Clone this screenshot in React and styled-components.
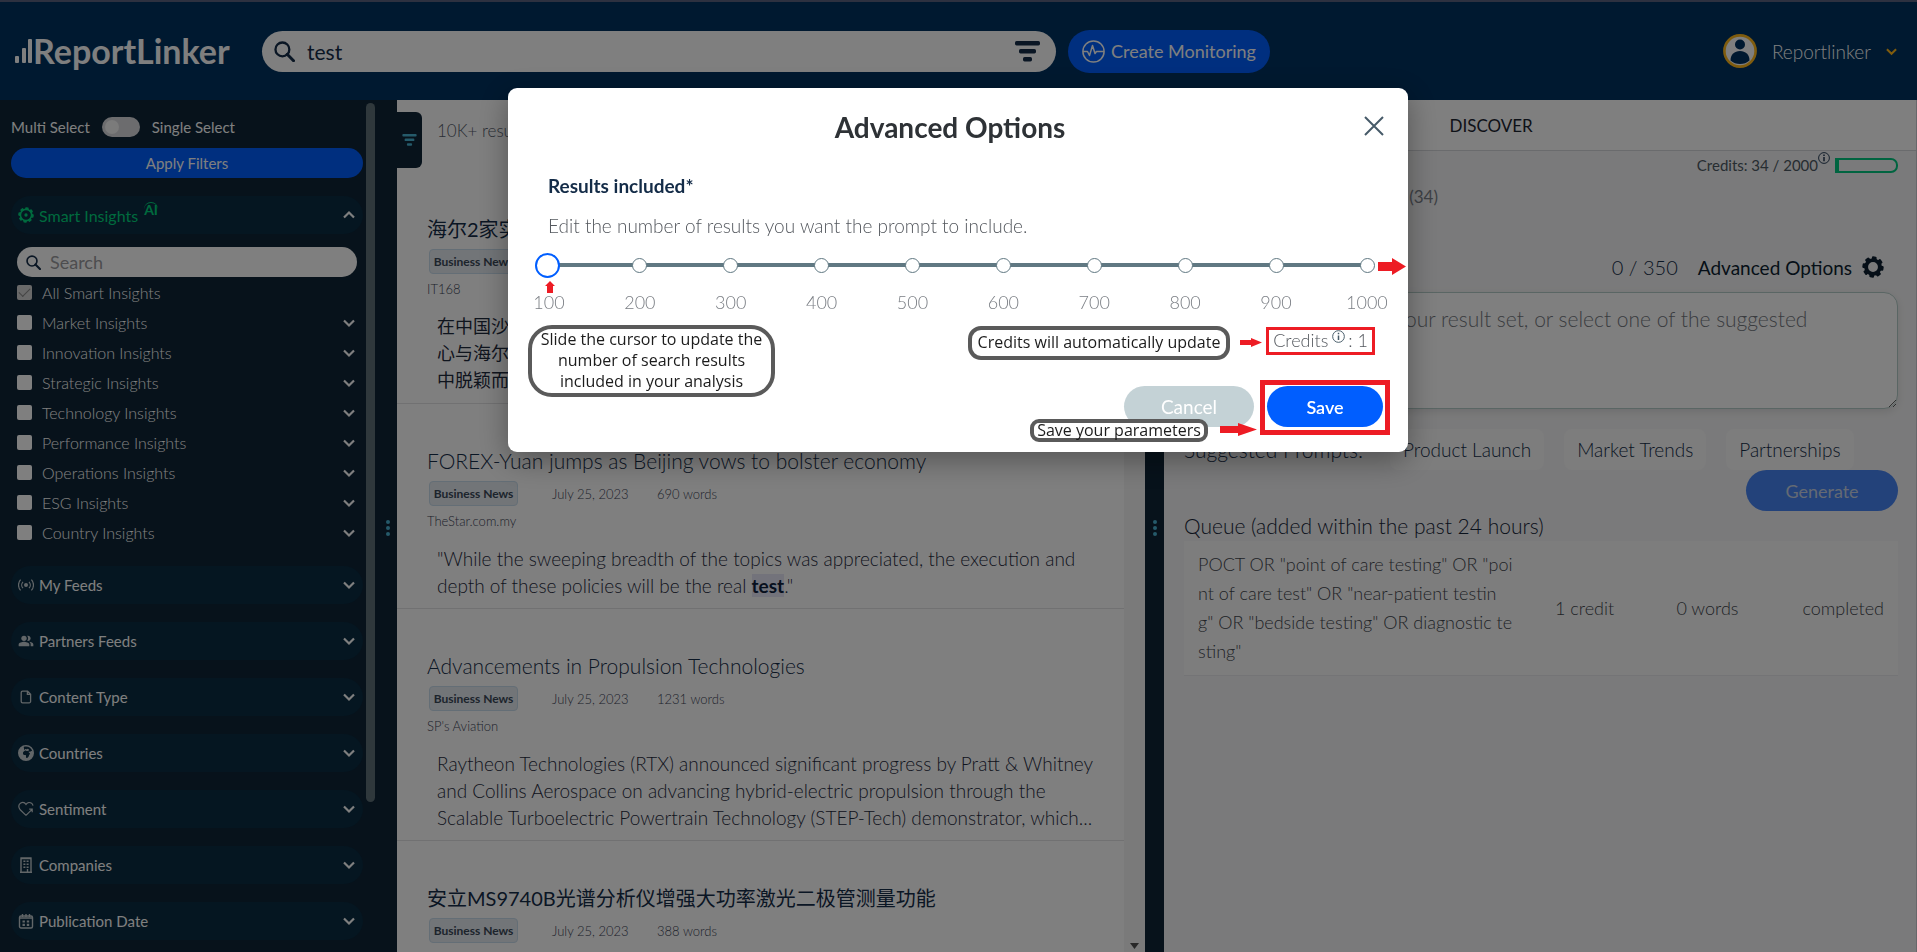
import React, { useState } from "react";
import styled, { createGlobalStyle, css } from "styled-components";
import { MdPeopleAlt } from "react-icons/md";
import { FaEarthAfrica } from "react-icons/fa6";

const GlobalStyle = createGlobalStyle`
  * {
    box-sizing: border-box;
  }

  body {
    margin: 0;
    overflow: hidden;
    font-family: Lato, "Noto Sans CJK SC", sans-serif;
    color: #142c48;
  }

  button,
  input,
  textarea {
    font-family: inherit;
  }

  button {
    border: 0;
    padding: 0;
    background: none;
    cursor: pointer;
  }
`;

const Page = styled.div`
  display: flex;
  flex-direction: column;
  height: 100vh;
`;

/* ---------- header ---------- */

const Header = styled.header`
  display: flex;
  align-items: center;
  flex: none;
  height: 100px;
  padding: 0 20px 0 14px;
  border-top: 2px solid #5a6280;
  background: #003260;
`;

const Logo = styled.a`
  display: flex;
  align-items: center;
  width: 248px;
  color: #fff;
  font-size: 34px;
  font-weight: 700;
  line-height: 36px;
  text-decoration: none;
`;

const SearchBox = styled.label`
  display: flex;
  align-items: center;
  flex: none;
  width: 794px;
  height: 41px;
  padding: 0 16px 0 12px;
  border-radius: 21px;
  background: #fff;
`;

const SearchInput = styled.input`
  flex: 1;
  min-width: 0;
  padding: 0 0 0 12px;
  border: 0;
  outline: 0;
  background: none;
  color: #142c48;
  font-size: 21px;
`;

const MonitoringButton = styled.button`
  display: flex;
  align-items: center;
  justify-content: center;
  gap: 6px;
  width: 202px;
  height: 43px;
  margin-left: 12px;
  border-radius: 22px;
  background: #005eff;
  color: #fff;
  font-size: 18px;
`;

const AccountButton = styled.button`
  display: flex;
  align-items: center;
  gap: 15px;
  margin-left: auto;
  color: #fff;
  font-size: 19px;
  font-weight: 300;
`;

/* ---------- sidebar ---------- */

const Columns = styled.main`
  display: grid;
  grid-template-columns: 397px minmax(0, 748fr) 19px minmax(0, 753fr);
  flex: 1;
  min-height: 0;
`;

const Sidebar = styled.aside`
  display: flex;
  min-height: 0;
  overflow: hidden;
  background: #0e2436;
  color: #fff;
`;

const Filters = styled.div`
  width: 366px;
  padding: 17px 3px 0 11px;
`;

const SelectMode = styled.label`
  display: flex;
  align-items: center;
  gap: 12px;
  height: 20px;
  font-size: 15px;
`;

const Switch = styled.input`
  appearance: none;
  width: 38px;
  height: 20px;
  margin: 0;
  padding: 3px;
  border-radius: 10px;
  background: #d8d8dc;

  &::before {
    content: "";
    display: block;
    width: 14px;
    height: 14px;
    border-radius: 50%;
    background: #f6f6f6;
  }
`;

const ApplyButton = styled.button`
  width: 100%;
  height: 30px;
  margin: 11px 0 18px;
  border-radius: 15px;
  background: #005eff;
  color: #fff;
  font-size: 15px;
`;

const Section = styled.button`
  display: flex;
  align-items: center;
  width: 100%;
  height: 38px;
  margin-bottom: 18px;
  padding: 0 8px 0 7px;
  border-radius: 19px;
  background: #0a2c42;
  color: ${props => (props.$active ? "#00d47c" : "#fff")};
  font-size: ${props => (props.$active ? 16 : 15)}px;

  > svg:last-child {
    margin-left: auto;
    color: #fff;
  }
`;

const SectionName = styled.span`
  margin-left: 5px;
`;

const AiMark = styled.sup`
  margin: -12px 0 0 6px;
  border-top: 1px solid #00d47c;
  border-radius: 8px;
  font-size: 14px;
  font-weight: 700;
  line-height: 14px;
`;

const FilterSearch = styled.label`
  display: flex;
  align-items: center;
  height: 30px;
  margin: -5px 6px 8px;
  padding: 0 9px;
  border-radius: 15px;
  background: #fff;
  color: #0e2436;

  input {
    padding-left: 9px;
    font-size: 18px;
  }

  input::placeholder {
    color: #9a9a9e;
  }
`;

const OptionList = styled.ul`
  display: grid;
  gap: 15px;
  margin: 0 0 26px;
  padding: 0 8px 0 6px;
  list-style: none;
`;

const Option = styled.li`
  display: flex;
  align-items: center;
  justify-content: space-between;
  height: 15px;
  font-size: 16px;
  font-weight: 300;

  label {
    display: flex;
    align-items: center;
    gap: 10px;
    line-height: 18px;
  }
`;

const Checkbox = styled.input`
  appearance: none;
  width: 15px;
  height: 15px;
  margin: 0;
  border-radius: 2px;
  background: #fff;

  &:checked {
    background: #d2d2d2;
  }

  &:checked::before {
    content: "";
    display: block;
    width: 10px;
    height: 5px;
    margin: 3px 0 0 2px;
    border: solid #8a8a8a;
    border-width: 0 0 1px 1px;
    rotate: -45deg;
  }
`;

const SidebarScroll = styled.div`
  width: 9px;
  height: 699px;
  margin-top: 3px;
  border-radius: 5px;
  background: #5e7078;
`;

const Handle = styled.div`
  display: flex;
  flex-direction: column;
  align-items: center;
  gap: 2px;
  padding-top: 420px;
  background: #0e2436;

  ${props => props.$wide && css`
    flex: 1;
    padding-left: 4px;
  `}

  i {
    width: 4px;
    height: 4px;
    border-radius: 50%;
    background: #4ab4d4;
  }
`;

/* ---------- results ---------- */

const Results = styled.section`
  display: flex;
  min-height: 0;
  overflow: hidden;
  background: #fff;
`;

const ResultList = styled.div`
  flex: 1;
  min-width: 0;
`;

const ResultsTop = styled.div`
  display: flex;
  gap: 15px;
  height: 72px;
  padding-top: 12px;
  color: #545c6a;
  font-size: 17px;
  font-weight: 300;
  line-height: 38px;
`;

const FilterTab = styled.button`
  display: flex;
  align-items: center;
  justify-content: center;
  width: 25px;
  height: 56px;
  border-radius: 0 6px 6px 0;
  background: #0e2436;
  color: #4ab4d4;
`;

const Article = styled.article`
  padding: 44px 30px 9px;
  border-bottom: 1px solid #e2e2e4;
`;

const ArticleTitle = styled.h3`
  margin: 0 0 7px;
  color: #142c48;
  font-size: 21px;
  font-weight: 300;
  line-height: 26px;
  white-space: nowrap;

  &:lang(zh) {
    font-size: 20px;
    font-weight: 400;
  }
`;

const ArticleMeta = styled.div`
  display: flex;
  align-items: center;
  height: 25px;
  color: #3c4456;
  font-size: 13px;
  font-weight: 300;
`;

const Tag = styled.span`
  width: 89px;
  margin: 0 34px 0 2px;
  border: 1px solid #c8dcec;
  border-radius: 4px;
  background: #e4eaf0;
  color: #3a4858;
  font-size: 12px;
  font-weight: 700;
  line-height: 23px;
  text-align: center;
  white-space: nowrap;
`;

const ArticleDate = styled.time`
  width: 105px;
`;

const Source = styled.div`
  margin: 6px 0 15px;
  color: #3c4456;
  font-size: 13px;
  font-weight: 300;
  line-height: 18px;
`;

const Excerpt = styled.p`
  margin: 0;
  padding-left: 10px;
  color: #1e2a3c;
  font-size: 19px;
  font-weight: 300;
  line-height: 27px;
  white-space: pre;

  &:lang(zh) {
    font-size: 18px;
    font-weight: 400;
  }

  mark {
    background: #e6e7f6;
    color: #0e1e3c;
    font-weight: 700;
  }
`;

const ResultsScroll = styled.div`
  display: flex;
  align-items: flex-end;
  justify-content: center;
  width: 21px;
  padding-bottom: 3px;
  background: #f4f4f4;
  color: #505050;
`;

/* ---------- prompt panel ---------- */

const Panel = styled.section`
  display: flex;
  flex-direction: column;
  min-width: 0;
  border-right: 1px solid #cfcfd4;
  background: #f5f5f6;
`;

const Tabs = styled.nav`
  display: flex;
  flex: none;
  height: 51px;
  border-bottom: 1px solid #d4d6da;
  background: #fff;
`;

const Tab = styled.button`
  width: 29%;
  color: #1c2430;
  font-size: 17px;
`;

const PanelBody = styled.div`
  padding: 0 18px 0 20px;
`;

const CreditsRow = styled.div`
  display: flex;
  align-items: center;
  justify-content: flex-end;
  height: 28px;
  color: #4e5a64;
  font-size: 15px;

  svg {
    margin: -14px 5px 0 0;
  }
`;

const CreditsMeter = styled.span`
  width: 63px;
  height: 15px;
  border: 2px solid #00c880;
  border-left-width: 4px;
  border-radius: 0 7px 7px 0;
`;

const PromptNav = styled.nav`
  display: flex;
  justify-content: space-between;
  width: 254px;
  color: #7c828a;
  font-size: 17px;
  line-height: 36px;
`;

const PromptTools = styled.div`
  display: flex;
  align-items: center;
  justify-content: flex-end;
  height: 50px;
  margin-top: 27px;
  padding-right: 14px;
  font-size: 20px;
  font-weight: 300;
`;

const OptionsButton = styled.button`
  display: flex;
  align-items: center;
  gap: 10px;
  margin-left: 20px;
  color: #0c1e30;
  font-size: 19px;
  font-weight: 400;
`;

const PromptField = styled.textarea`
  display: block;
  width: 100%;
  height: 117px;
  padding: 12px 14px;
  border: 1px solid #b4ccc8;
  border-radius: 0 14px 14px 14px;
  outline: 0;
  background: #fff;
  box-shadow: 0 3px 8px rgba(0, 0, 0, 0.1);
  font-size: 21px;
  font-weight: 300;
  line-height: 28px;

  &::placeholder {
    color: #74787e;
  }
`;

const Suggestions = styled.div`
  display: flex;
  align-items: center;
  gap: 20px;
  height: 41px;
  margin-top: 20px;
  font-size: 21px;
  font-weight: 300;
  white-space: nowrap;
`;

const SuggestionLabel = styled.span`
  width: 186px;
`;

const Chip = styled.button`
  height: 41px;
  padding: 0 13px;
  border-radius: 8px;
  background: #fafafa;
  color: #142c48;
  font-size: 19px;
  font-weight: 300;
`;

const GenerateButton = styled.button`
  display: block;
  width: 152px;
  height: 41px;
  margin-left: auto;
  border-radius: 21px;
  background: #4684f4;
  color: #c8d4e8;
  font-size: 18px;
`;

const QueueTable = styled.table`
  width: 100%;
  border-spacing: 0;
  color: #42464e;
  font-size: 18px;
  font-weight: 300;
  line-height: 29px;

  caption {
    padding-bottom: 1px;
    color: #142438;
    font-size: 21px;
    text-align: left;
  }

  td {
    padding: 9px 14px;
    border-bottom: 1px solid #e8e8ec;
    background: #fbfbfb;
    white-space: nowrap;
  }

  td:first-child {
    width: 50%;
  }

  td:nth-child(2) {
    width: 17%;
  }

  td:last-child {
    text-align: right;
  }
`;

/* ---------- dialog ---------- */

const Overlay = styled.div`
  position: fixed;
  inset: 0;
  display: flex;
  align-items: flex-start;
  justify-content: center;
  padding: 88px 1px 0 0;
  background: rgba(0, 0, 0, 0.5);
`;

const Dialog = styled.div`
  position: relative;
  width: 900px;
  padding: 21px 40px 25px;
  border-radius: 9px;
  background: #fff;
  box-shadow: 0 8px 30px rgba(0, 0, 0, 0.35);
`;

const DialogHead = styled.div`
  display: flex;
  align-items: center;
  height: 36px;
  margin-right: -28px;

  h2 {
    flex: 1;
    margin: 0;
    color: #2e3236;
    font-size: 28px;
    font-weight: 700;
    text-align: center;
  }

  button {
    width: 44px;
    height: 36px;
    color: #465a68;
  }
`;

const FieldName = styled.label`
  display: block;
  margin: 29px 0 16px;
  color: #142c48;
  font-size: 19px;
  font-weight: 700;
  line-height: 24px;
`;

const Hint = styled.p`
  margin: 0 0 14px;
  color: #54585e;
  font-size: 19px;
  font-weight: 300;
  line-height: 24px;
`;

const SliderBox = styled.div`
  display: grid;
  align-items: center;
  height: 26px;
  margin: 0 -13px;

  > * {
    grid-area: 1 / 1;
  }
`;

const Ticks = styled.div`
  display: flex;
  justify-content: space-between;
  align-items: center;
  height: 4px;
  margin: 0 13px;
  background: #607882;

  i {
    width: 15px;
    height: 15px;
    margin: 0 -7px;
    border: 1px solid #607882;
    border-radius: 50%;
    background: #fff;
  }
`;

const Range = styled.input`
  appearance: none;
  z-index: 1;
  width: 100%;
  margin: 0;
  background: none;

  &::-webkit-slider-thumb {
    appearance: none;
    width: 25px;
    height: 25px;
    border: 2px solid #005eff;
    border-radius: 50%;
    background: #fff;
  }
`;

const Scale = styled.div`
  display: flex;
  justify-content: space-between;
  margin: 12px 0 0;
  color: #7a7e84;
  font-size: 18px;
  font-weight: 300;
  line-height: 24px;

  span {
    display: flex;
    justify-content: center;
    width: 2px;
  }
`;

const Cost = styled.p`
  display: flex;
  align-items: center;
  justify-content: flex-end;
  height: 28px;
  margin: 12px 0 0;
  color: #54585e;
  font-size: 18px;
  font-weight: 300;

  svg {
    margin: -8px 3px 0 4px;
  }
`;

const Actions = styled.div`
  display: flex;
  align-items: flex-start;
  justify-content: flex-end;
  gap: 13px;
  margin: 32px -15px 0 0;
`;

const ActionButton = styled.button`
  width: ${props => (props.$primary ? 116 : 130)}px;
  height: 41px;
  border-radius: 21px;
  background: ${props => (props.$primary ? "#005eff" : "#c4d2d6")};
  color: #fff;
  font-size: ${props => (props.$primary ? 18 : 19)}px;
  font-weight: ${props => (props.$primary ? 600 : 400)};
`;

/* Notes drawn over the dialog, placed from its top left corner. */
const Note = styled.div`
  position: absolute;
  left: ${props => props.$x}px;
  top: ${props => props.$y}px;
  width: ${props => props.$w}px;
  height: ${props => props.$h}px;
  border: 4px solid #5a5a5a;
  border-radius: ${props => props.$r}px;
  background: #fff;
  color: #1c1c1c;
  font-family: "Open Sans", "Noto Sans", sans-serif;
  font-size: 16px;
  line-height: ${props => props.$line || 21}px;
  text-align: center;
  white-space: pre;
`;

const NoteFrame = styled.div`
  position: absolute;
  left: ${props => props.$x}px;
  top: ${props => props.$y}px;
  width: ${props => props.$w}px;
  height: ${props => props.$h}px;
  border: ${props => props.$line}px solid #ed1c24;
  pointer-events: none;
`;

const NoteArrow = styled.svg`
  position: absolute;
  left: ${props => props.$x}px;
  top: ${props => props.$y}px;
  fill: #ed1c24;
`;

/* ---------- icons ---------- */

const Chevron = ({ up, size = 12, color = "currentColor" }) => (
  <svg width={size} height={size} viewBox="0 0 12 12" fill="none" stroke={color} strokeWidth="2.2">
    <path d={up ? "M1 8.5 6 3.5l5 5" : "M1 3.5l5 5 5-5"} />
  </svg>
);

const Magnifier = ({ size }) => (
  <svg width={size} height={size} viewBox="0 0 20 20" fill="none" stroke="#142c48" strokeWidth="2.2">
    <circle cx="8" cy="8" r="6.6" />
    <path d="M12.6 12.6 18.6 18.8" strokeWidth="2.8" strokeLinecap="round" />
  </svg>
);

const FilterBars = ({ width, height }) => (
  <svg width={width} height={height} viewBox="0 0 25 21" fill="currentColor">
    <rect width="25" height="4.4" rx="1.6" />
    <rect x="4" y="8" width="17" height="4.4" rx="1.6" />
    <rect x="8" y="16" width="9" height="4.4" rx="1.6" />
  </svg>
);

const Info = ({ size, color = "#142c48" }) => (
  <svg width={size} height={size} viewBox="0 0 12 12" fill="none" stroke={color}>
    <circle cx="6" cy="6" r="5.4" strokeWidth="0.9" />
    <path d="M6 5v4.2M6 2.6v1.3" strokeWidth="1.4" />
  </svg>
);

const Cog = ({ size, hole, children }) => (
  <svg width={size} height={size} viewBox="0 0 24 24">
    <g fill="currentColor">
      {[0, 45, 90, 135, 180, 225, 270, 315].map(angle => (
        <rect key={angle} x="9.4" y="0.4" width="5.2" height="4" rx="1.2" transform={`rotate(${angle + 8} 12 12)`} />
      ))}
    </g>
    <circle cx="12" cy="12" r={(hole + 9.6) / 2} fill="none" stroke="currentColor" strokeWidth={9.6 - hole} />
    {children}
  </svg>
);

const strokeIcon = { width: 16, height: 16, viewBox: "0 0 16 16", fill: "none", stroke: "#c4ccd0" };

const Broadcast = () => (
  <svg {...strokeIcon} strokeWidth="1.2">
    <circle cx="8" cy="8" r="2" fill="#c4ccd0" stroke="none" />
    <path d="M5 4.8a4.6 4.6 0 0 0 0 6.4M11 4.8a4.6 4.6 0 0 1 0 6.4M2.6 2.6a8 8 0 0 0 0 10.8M13.4 2.6a8 8 0 0 1 0 10.8" />
  </svg>
);

const FileIcon = () => (
  <svg {...strokeIcon} strokeWidth="1.3">
    <path d="M4.6 2.2h5l3 3v7.2a1.4 1.4 0 0 1-1.4 1.4H4.6a1.4 1.4 0 0 1-1.4-1.4V3.6a1.4 1.4 0 0 1 1.4-1.4zM9.4 2.4v3h3" />
  </svg>
);

const HeartArrow = () => (
  <svg {...strokeIcon} strokeWidth="1.2">
    <path d="M8 14.4 2.2 8.8C.2 6.6.4 3.4 2.4 2.2 4.4 1 6.8 1.6 8 3.4 9.2 1.6 11.8 1 13.6 2.2c.8.6 1.2 1.4 1.4 2.4M8 14.4l5.8-5.8M11.2 8.2h3v3" />
  </svg>
);

const Tower = () => (
  <svg {...strokeIcon} strokeWidth="1.4">
    <path d="M3 15.3V1.5h10v13.8M2 15.3h12M2.4 1h11.2" />
    <path d="M6.4 3.5v8M9.6 3.5v8" strokeWidth="2" strokeDasharray="1.5 1.5" />
    <path d="M9.5 12v3" />
  </svg>
);

const CalendarIcon = () => (
  <svg {...strokeIcon} strokeWidth="1.4">
    <rect x="1.5" y="3" width="13" height="12" rx="1.5" />
    <path d="M4.5 1v3M8 1v3M11.5 1v3M1.5 5h13" />
    <path d="M4.5 8.5h3M8.8 8.5h3M4.5 11.8h3M8.8 11.8h3" strokeWidth="2.2" strokeDasharray="2.4 .6" />
  </svg>
);

const LogoBars = () => (
  <svg width="19" height="26" viewBox="0 0 19 26" fill="#fff">
    <rect x="1" y="18" width="4" height="7" rx="1" />
    <rect x="8" y="10" width="4" height="15" rx="1" />
    <rect x="14" y="1" width="4" height="24" rx="1" />
  </svg>
);

const Pulse = () => (
  <svg width="23" height="23" viewBox="0 0 23 23" fill="none" stroke="#fff" strokeWidth="1.5">
    <circle cx="11.5" cy="11.5" r="10.6" />
    <path d="M1 11.5h4.5l2 4 3-10 2.5 8 1.5-2h7.5" strokeLinejoin="round" />
  </svg>
);

const Avatar = () => (
  <svg width="34" height="34" viewBox="0 0 34 34">
    <circle cx="17" cy="17" r="15.6" fill="#fff" stroke="#ffb81c" strokeWidth="2.6" />
    <circle cx="17" cy="10.5" r="5" fill="#003260" />
    <path d="M7.5 26.5c0-6 4-9.5 9.5-9.5s9.5 3.5 9.5 9.5c-5 4.7-14 4.7-19 0z" fill="#003260" />
  </svg>
);

/* ---------- data ---------- */

const insights = ["Market", "Innovation", "Strategic", "Technology", "Performance", "Operations", "ESG", "Country"];

const sections = [
    { name: "My Feeds", icon: <Broadcast /> },
    { name: "Partners Feeds", icon: <MdPeopleAlt size={16} color="#c4ccd0" /> },
    { name: "Content Type", icon: <FileIcon /> },
    { name: "Countries", icon: <FaEarthAfrica size={16} color="#c4ccd0" /> },
    { name: "Sentiment", icon: <HeartArrow /> },
    { name: "Companies", icon: <Tower /> },
    { name: "Publication Date", icon: <CalendarIcon /> }
];

const articles = [
    {
        lang: "zh",
        title: "海尔2家实验室获得国家认可",
        words: 512,
        source: "IT168",
        excerpt: "在中国沙漠地区的测试中\n心与海尔合作的产品测试\n中脱颖而出"
    },
    {
        lang: "en",
        title: "FOREX-Yuan jumps as Beijing vows to bolster economy",
        words: 690,
        source: "TheStar.com.my",
        excerpt: (
            <>
                {'"While the sweeping breadth of the topics was appreciated, the execution and\ndepth of these policies will be the real '}
                <mark>test</mark>
                {'."'}
            </>
        )
    },
    {
        lang: "en",
        title: "Advancements in Propulsion Technologies",
        words: 1231,
        source: "SP's Aviation",
        excerpt: "Raytheon Technologies (RTX) announced significant progress by Pratt & Whitney\nand Collins Aerospace on advancing hybrid-electric propulsion through the\nScalable Turboelectric Powertrain Technology (STEP-Tech) demonstrator, which..."
    },
    {
        lang: "zh",
        title: "安立MS9740B光谱分析仪增强大功率激光二极管测量功能",
        words: 388
    }
];

const steps = [100, 200, 300, 400, 500, 600, 700, 800, 900, 1000];

const Dots = ({ wide }) => (
  <Handle $wide={wide}>
    <i />
    <i />
    <i />
  </Handle>
);

function TopBar() {
    return (
        <Header>
            <Logo href="#" aria-label="ReportLinker">
                <LogoBars />
                ReportLinker
            </Logo>
            <SearchBox>
                <Magnifier size={21} />
                <SearchInput defaultValue="test" aria-label="Search" />
                <FilterBars width={25} height={21} />
            </SearchBox>
            <MonitoringButton>
                <Pulse />
                Create Monitoring
            </MonitoringButton>
            <AccountButton>
                <Avatar />
                Reportlinker
                <Chevron size={11} color="#ffb81c" />
            </AccountButton>
        </Header>
    );
}

function FilterSidebar() {
    return (
        <Sidebar>
            <Filters>
                <SelectMode>
                    Multi Select
                    <Switch type="checkbox" role="switch" />
                    Single Select
                </SelectMode>
                <ApplyButton>Apply Filters</ApplyButton>
                <Section $active>
                    <Cog size={16} hole={7.2}>
                        <circle cx="12" cy="12" r="2.5" fill="currentColor" />
                    </Cog>
                    <SectionName>Smart Insights</SectionName>
                    <AiMark>AI</AiMark>
                    <Chevron up />
                </Section>
                <FilterSearch>
                    <Magnifier size={15} />
                    <SearchInput placeholder="Search" aria-label="Search insights" />
                </FilterSearch>
                <OptionList>
                    <Option>
                        <label>
                            <Checkbox type="checkbox" defaultChecked />
                            All Smart Insights
                        </label>
                    </Option>
                    {insights.map(name =>
                        <Option key={name}>
                            <label>
                                <Checkbox type="checkbox" />
                                {name} Insights
                            </label>
                            <Chevron />
                        </Option>
                    )}
                </OptionList>
                {sections.map(section =>
                    <Section key={section.name}>
                        {section.icon}
                        <SectionName>{section.name}</SectionName>
                        <Chevron />
                    </Section>
                )}
            </Filters>
            <SidebarScroll />
            <Dots wide />
        </Sidebar>
    );
}

function ResultsColumn() {
    return (
        <Results>
            <ResultList>
                <ResultsTop>
                    <FilterTab aria-label="Filters">
                        <FilterBars width={15} height={12} />
                    </FilterTab>
                    10K+ results
                </ResultsTop>
                {articles.map(article =>
                    <Article key={article.title} lang={article.lang}>
                        <ArticleTitle>{article.title}</ArticleTitle>
                        <ArticleMeta>
                            <Tag>Business News</Tag>
                            <ArticleDate>July 25, 2023</ArticleDate>
                            {article.words} words
                        </ArticleMeta>
                        {article.source && <Source>{article.source}</Source>}
                        {article.excerpt && <Excerpt>{article.excerpt}</Excerpt>}
                    </Article>
                )}
            </ResultList>
            <ResultsScroll>
                <svg width="9" height="6" viewBox="0 0 9 6" fill="currentColor">
                    <path d="M0 0h9L4.5 6z" />
                </svg>
            </ResultsScroll>
        </Results>
    );
}

function PromptPanel() {
    return (
        <Panel>
            <Tabs>
                <Tab>GENERATE</Tab>
                <Tab>DISCOVER</Tab>
            </Tabs>
            <PanelBody>
                <CreditsRow>
                    Credits: 34 / 2000
                    <Info size={12} />
                    <CreditsMeter />
                </CreditsRow>
                <PromptNav>
                    <span>Prompt</span>
                    <span>History (34)</span>
                </PromptNav>
                <PromptTools>
                    0 / 350
                    <OptionsButton>
                        Advanced Options
                        <Cog size={22} hole={5.4} />
                    </OptionsButton>
                </PromptTools>
                <PromptField
                    aria-label="Prompt"
                    placeholder="Ask a question about your result set, or select one of the suggested"
                />
                <Suggestions>
                    <SuggestionLabel>Suggested Prompts:</SuggestionLabel>
                    <Chip>Product Launch</Chip>
                    <Chip>Market Trends</Chip>
                    <Chip>Partnerships</Chip>
                </Suggestions>
                <GenerateButton>Generate</GenerateButton>
                <QueueTable>
                    <caption>Queue (added within the past 24 hours)</caption>
                    <tbody>
                        <tr>
                            <td>
                                POCT OR "point of care testing" OR "poi<br />
                                nt of care test" OR "near-patient testin<br />
                                g" OR "bedside testing" OR diagnostic te<br />
                                sting"
                            </td>
                            <td>1 credit</td>
                            <td>0 words</td>
                            <td>completed</td>
                        </tr>
                    </tbody>
                </QueueTable>
            </PanelBody>
        </Panel>
    );
}

function AdvancedOptions() {
    const [count, setCount] = useState(100);

    return (
        <Overlay>
            <Dialog role="dialog" aria-labelledby="options-title">
                <DialogHead>
                    <h2 id="options-title">Advanced Options</h2>
                    <button aria-label="Close">
                        <svg width="20" height="20" viewBox="0 0 20 20" stroke="currentColor" strokeWidth="2">
                            <path d="M1 1l18 18M19 1 1 19" />
                        </svg>
                    </button>
                </DialogHead>
                <FieldName htmlFor="result-count">Results included*</FieldName>
                <Hint>Edit the number of results you want the prompt to include.</Hint>
                <SliderBox>
                    <Ticks>{steps.map(step => <i key={step} />)}</Ticks>
                    <Range
                        id="result-count"
                        type="range"
                        min="100"
                        max="1000"
                        step="100"
                        value={count}
                        onChange={event => setCount(Number(event.target.value))}
                    />
                </SliderBox>
                <Scale>{steps.map(step => <span key={step}>{step}</span>)}</Scale>
                <Cost>
                    Credits
                    <Info size={13} color="#465a68" />
                    : {count / 100}
                </Cost>
                <Actions>
                    <ActionButton>Cancel</ActionButton>
                    <ActionButton $primary>Save</ActionButton>
                </Actions>

                <NoteArrow $x={37} $y={193} width="10" height="12" viewBox="0 0 10 12">
                    <path d="M5 0l5 5H8v7H2V5H0z" />
                </NoteArrow>
                <NoteArrow $x={870} $y={170} width="28" height="17" viewBox="0 0 28 17">
                    <path d="M0 4h14V0l14 8.5L14 17v-4H0z" />
                </NoteArrow>
                <Note $x={20} $y={237} $w={247} $h={72} $r={24}>
                    {"Slide the cursor to update the\nnumber of search results\nincluded in your analysis"}
                </Note>
                <Note $x={460} $y={238} $w={262} $h={34} $r={13} $line={25}>Credits will automatically update</Note>
                <NoteArrow $x={732} $y={250} width="22" height="9" viewBox="0 0 22 9">
                    <path d="M0 2h11V0l11 4.5L11 9V7H0z" />
                </NoteArrow>
                <NoteFrame $x={758} $y={239} $w={109} $h={28} $line={3} />
                <Note $x={522} $y={331} $w={178} $h={23} $r={9} $line={15}>Save your parameters</Note>
                <NoteArrow $x={712} $y={335} width="37" height="13" viewBox="0 0 37 13">
                    <path d="M0 3h18V0l19 6.5L18 13v-3H0z" />
                </NoteArrow>
                <NoteFrame $x={752} $y={292} $w={130} $h={55} $line={5} />
            </Dialog>
        </Overlay>
    );
}

export default function App() {
    return (
        <>
            <GlobalStyle />
            <Page>
                <TopBar />
                <Columns>
                    <FilterSidebar />
                    <ResultsColumn />
                    <Dots />
                    <PromptPanel />
                </Columns>
            </Page>
            <AdvancedOptions />
        </>
    );
}
